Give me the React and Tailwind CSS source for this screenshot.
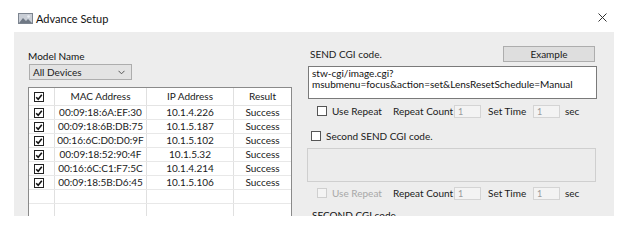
import React from "react";

const rows = [
  ["00:09:18:6A:EF:30", "10.1.4.226"],
  ["00:09:18:6B:DB:75", "10.1.5.187"],
  ["00:16:6C:D0:D0:9F", "10.1.5.102"],
  ["00:09:18:52:90:4F", "10.1.5.32"],
  ["00:16:6C:C1:F7:5C", "10.1.4.214"],
  ["00:09:18:5B:D6:45", "10.1.5.106"],
];

function Check({ checked, disabled }) {
  return (
    <span
      className={
        "inline-flex w-[10px] h-[10px] shrink-0 items-center justify-center border " +
        (disabled ? "border-[#cfcfcf] bg-[#f4f4f4]" : checked ? "border-[#222] bg-white" : "border-[#555] bg-white")
      }
    >
      {checked && (
        <svg width="8" height="8" viewBox="0 0 8 8">
          <path d="M1.2 4.2 L3.2 6.2 L6.8 1.8" fill="none" stroke="#111" strokeWidth="1.6" />
        </svg>
      )}
    </span>
  );
}

function RepeatRow({ disabled }) {
  return (
    <div className="flex items-center h-[16px] pl-[10px] text-[#1a1a1a] whitespace-nowrap">
      <div className="w-[76px] flex items-center gap-[5px]">
        <Check disabled={disabled} />
        <span className={disabled ? "text-[#a8a8a8]" : ""}>Use Repeat</span>
      </div>
      <span className="w-[61px]">Repeat Count</span>
      <span className="w-[27px] h-[13px] border border-[#d4d4d4] bg-[#f3f3f3] text-[#9a9a9a] pl-[3px] leading-[11px] text-[9px]">1</span>
      <span className="ml-[7px] w-[45px]">Set Time</span>
      <span className="w-[27px] h-[13px] border border-[#d4d4d4] bg-[#f3f3f3] text-[#9a9a9a] pl-[3px] leading-[11px] text-[9px]">1</span>
      <span className="ml-[5px]">sec</span>
    </div>
  );
}

export default function App() {
  return (
    <div className="w-[629px] h-[230px] bg-white overflow-hidden font-['Lato','Noto_Sans',sans-serif] text-[10px] leading-[13px] text-[#1a1a1a]">
      <div className="h-[32px] flex items-center pl-[18px] pr-[22px] pt-[4px]">
        <svg width="15" height="11" viewBox="0 0 15 11" className="mr-[3px]">
          <rect x="0.5" y="0.5" width="14" height="10" fill="#c9ced6" stroke="#7d8590" />
          <path d="M1 10 L5 5 L8 8 L10 6 L14 10 Z" fill="#6f7884" />
          <circle cx="10.5" cy="3.5" r="1.3" fill="#e9edf2" />
        </svg>
        <span className="text-[11px] text-[#111]">Advance Setup</span>
        <svg width="9" height="9" viewBox="0 0 9 9" className="ml-auto mt-[-2px]">
          <path d="M0.5 0.5 L8.5 8.5 M8.5 0.5 L0.5 8.5" stroke="#333" strokeWidth="1" />
        </svg>
      </div>
      <div className="ml-[14px] w-[600px] h-[184px] bg-[#ededed] overflow-hidden flex">
        <div className="ml-[14px] w-[264px] shrink-0">
          <div className="pt-[18px] h-[32px] text-[#111]">Model Name</div>
          <div className="ml-[1px] w-[103px] h-[16px] bg-[#e3e3e3] border border-[#adadad] flex items-center pl-[3px] pr-[6px]">
            <span>All Devices</span>
            <svg width="7" height="5" viewBox="0 0 7 5" className="ml-auto">
              <path d="M0.5 0.8 L3.5 3.8 L6.5 0.8" fill="none" stroke="#555" strokeWidth="1" />
            </svg>
          </div>
          <div className="mt-[7px] w-[264px] h-[160px] bg-white border border-[#8a8a8a] border-b-0">
            <div className="grid grid-cols-[26px_92px_87px_1fr] h-[18px] border-b border-[#e4e4e4]">
              <div className="flex items-center pl-[5px] border-r border-[#e0e0e0]"><Check checked /></div>
              <div className="flex items-center justify-center border-r border-[#e0e0e0]">MAC Address</div>
              <div className="flex items-center justify-center border-r border-[#e0e0e0]">IP Address</div>
              <div className="flex items-center justify-center">Result</div>
            </div>
            {rows.map(([mac, ip]) => (
              <div key={mac} className="grid grid-cols-[26px_92px_87px_1fr] h-[14px] border-b border-[#e8e8e8]">
                <div className="flex items-center pl-[5px] border-r border-[#e0e0e0]"><Check checked /></div>
                <div className="flex items-center justify-center border-r border-[#e0e0e0]">{mac}</div>
                <div className="flex items-center justify-center border-r border-[#e0e0e0]">{ip}</div>
                <div className="flex items-center justify-center">Success</div>
              </div>
            ))}
            {[0, 1, 2].map((i) => (
              <div key={i} className="grid grid-cols-[26px_92px_87px_1fr] h-[14px] border-b border-[#e8e8e8]">
                <div className="border-r border-[#e0e0e0]" />
                <div className="border-r border-[#e0e0e0]" />
                <div className="border-r border-[#e0e0e0]" />
                <div />
              </div>
            ))}
          </div>
        </div>
        <div className="ml-[15px] w-[290px] shrink-0">
          <div className="mt-[14px] h-[16px] flex items-center">
            <span className="pl-[3px]">SEND CGI code.</span>
            <div className="ml-auto mr-[2px] w-[92px] h-[16px] bg-[#dedede] border border-[#adadad] flex items-center justify-center">Example</div>
          </div>
          <div className="mt-[4px] ml-[1px] h-[33px] bg-white border border-[#7a7a7a] pl-[3px] pt-[1px] leading-[11px] text-[#111]">
            <div>stw-cgi/image.cgi?</div>
            <div>msubmenu=focus&amp;action=set&amp;LensResetSchedule=Manual</div>
          </div>
          <div className="mt-[4px]"><RepeatRow /></div>
          <div className="mt-[9px] h-[16px] flex items-center gap-[5px] pl-[4px]">
            <Check />
            <span>Second SEND CGI code.</span>
          </div>
          <div className="mt-[4px] h-[34px] w-[289px] bg-[#ececec] border border-[#cfcfcf]" />
          <div className="mt-[3px]"><RepeatRow disabled /></div>
          <div className="mt-[8px] pl-[5px] text-[#111]">SECOND CGI code.</div>
        </div>
      </div>
    </div>
  );
}
